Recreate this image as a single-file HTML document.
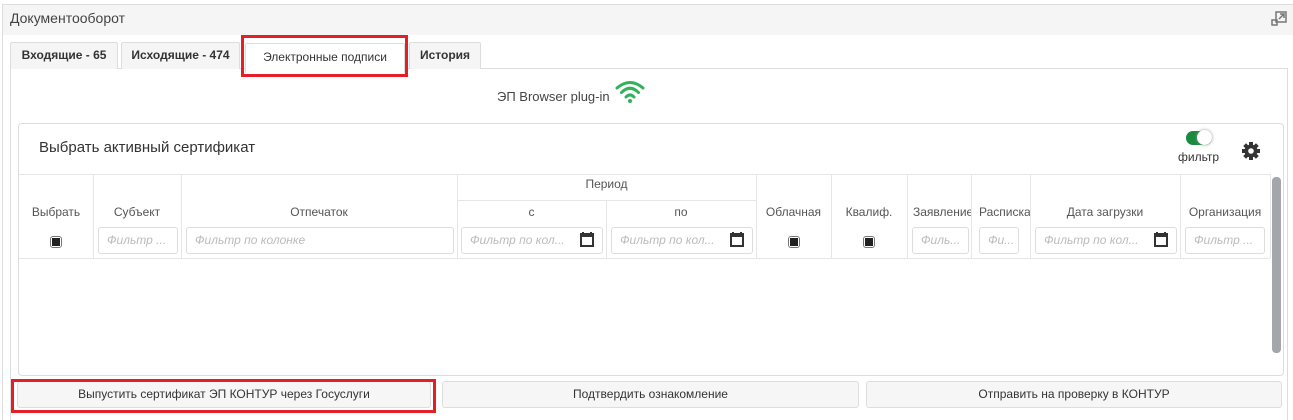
<!DOCTYPE html>
<html><head><meta charset="utf-8"><style>
*{box-sizing:border-box;margin:0;padding:0}
body{width:1293px;height:420px;background:#fff;font-family:"Liberation Sans",sans-serif;color:#333;position:relative;overflow:hidden}
.a{position:absolute}
.hdr{left:2px;top:4px;width:1291px;height:31px;background:#f5f5f5;border-top:1px solid #ddd;border-left:1px solid #ddd}
.tab{position:absolute;top:42px;height:27px;border:1px solid #ddd;border-bottom:none;background:#f5f5f5;font-size:12px;font-weight:bold;color:#333;text-align:center;line-height:25px;border-radius:2px 2px 0 0}
.lbl{position:absolute;top:205px;font-size:12px;color:#555;text-align:center}
.inp{position:absolute;top:227px;height:27px;border:1px solid #ddd;border-radius:3px;font-size:12px;font-style:italic;color:#bbb;padding-left:8px;line-height:25px;white-space:nowrap;overflow:hidden}
.cb{position:absolute;top:236px;width:12px;height:12px;border:1px solid #777;border-radius:3px;background:#fff}
.cb:after{content:"";position:absolute;left:1px;top:1px;width:8px;height:8px;background:#222}
.vl{position:absolute;width:1px;background:#e6e6e6}
.btn{position:absolute;top:381px;height:27px;border:1px solid #ddd;border-radius:3px;background:#f6f6f6;font-size:12px;text-align:center;line-height:25px;color:#333}
.cal{position:absolute;top:232px}
</style></head><body>
<div class="a hdr"></div>
<div class="a" style="left:2px;top:35px;width:1px;height:385px;background:#ddd"></div>
<div class="a" style="left:10px;top:10px;font-size:14px;color:#444">Документооборот</div>
<svg class="a" style="left:1271px;top:11px" width="16" height="16" viewBox="0 0 16 16"><rect x="5" y="1" width="10" height="10" fill="none" stroke="#777" stroke-width="1.5"/><rect x="1" y="9" width="5" height="5" fill="none" stroke="#777" stroke-width="1.5"/><path d="M8 8l5-5M9 3h4v4" fill="none" stroke="#777" stroke-width="1.5"/></svg>
<div class="a" style="left:10px;top:68px;width:1278px;height:1px;background:#ddd"></div>
<div class="a" style="left:1287px;top:68px;width:1px;height:352px;background:#ddd"></div>
<div class="a" style="left:10px;top:68px;width:1px;height:352px;background:#ddd"></div>
<div class="tab" style="left:10px;width:108px">Входящие - 65</div>
<div class="tab" style="left:121px;width:119px">Исходящие - 474</div>
<div class="tab" style="left:245px;top:43px;width:160px;height:30px;background:#fff;font-weight:normal;line-height:27px">Электронные подписи</div>
<div class="tab" style="left:409px;width:72px">История</div>
<div class="a" style="left:241px;top:35px;width:167px;height:42px;border:3px solid #e32028"></div>
<div class="a" style="left:497px;top:89px;font-size:13px;color:#444">ЭП Browser plug-in</div>
<svg class="a" style="left:614px;top:78px" width="32" height="26" viewBox="0 0 32 26"><path d="M3 10Q16-1 29 10M7.5 14.5Q16 6 24.5 14.5M12 19Q16 15 20 19" fill="none" stroke="#2fb35a" stroke-width="3" stroke-linecap="round"/><circle cx="16" cy="23" r="2" fill="#2fb35a"/></svg>
<div class="a" style="left:18px;top:123px;width:1266px;height:253px;border:1px solid #ddd;border-radius:4px"></div>
<div class="a" style="left:39px;top:139px;font-size:15px;color:#333">Выбрать активный сертификат</div>
<div class="a" style="left:1186px;top:131px;width:26px;height:14px;border-radius:7px;background:#1a8a3e"></div>
<div class="a" style="left:1197px;top:130px;width:15px;height:15px;border-radius:50%;background:#fff;box-shadow:0 0 3px #999"></div>
<div class="a" style="left:1178px;top:150px;font-size:12px;color:#333">фильтр</div>
<svg class="a" style="left:1241px;top:141px" width="20" height="20" viewBox="0 0 20 20"><g fill="#333"><circle cx="10" cy="10" r="6.5"/><rect x="8" y="1" width="4" height="18"/><rect x="1" y="8" width="18" height="4"/><rect x="8" y="1" width="4" height="18" transform="rotate(45 10 10)"/><rect x="8" y="1" width="4" height="18" transform="rotate(-45 10 10)"/></g><circle cx="10" cy="10" r="2.8" fill="#fff"/></svg>
<div class="a" style="left:19px;top:174px;width:1251px;height:1px;background:#e6e6e6"></div>
<div class="a" style="left:19px;top:258px;width:1251px;height:1px;background:#e6e6e6"></div>
<div class="a" style="left:457px;top:200px;width:299px;height:1px;background:#e6e6e6"></div>
<div class="vl" style="left:93px;top:174px;height:84px"></div>
<div class="vl" style="left:181px;top:174px;height:84px"></div>
<div class="vl" style="left:457px;top:174px;height:84px"></div>
<div class="vl" style="left:606px;top:200px;height:58px"></div>
<div class="vl" style="left:756px;top:174px;height:84px"></div>
<div class="vl" style="left:831px;top:174px;height:84px"></div>
<div class="vl" style="left:907px;top:174px;height:84px"></div>
<div class="vl" style="left:971px;top:174px;height:84px"></div>
<div class="vl" style="left:1030px;top:174px;height:84px"></div>
<div class="vl" style="left:1180px;top:174px;height:84px"></div>
<div class="vl" style="left:1270px;top:174px;height:84px"></div>
<div class="lbl" style="left:457px;width:299px;top:177px">Период</div>
<div class="lbl" style="left:19px;width:74px">Выбрать</div>
<div class="lbl" style="left:93px;width:88px">Субъект</div>
<div class="lbl" style="left:181px;width:276px">Отпечаток</div>
<div class="lbl" style="left:457px;width:149px">с</div>
<div class="lbl" style="left:606px;width:150px">по</div>
<div class="lbl" style="left:756px;width:75px">Облачная</div>
<div class="lbl" style="left:831px;width:76px">Квалиф.</div>
<div class="lbl" style="left:913px;width:58px;text-align:left;overflow:hidden;white-space:nowrap">Заявление</div>
<div class="lbl" style="left:979px;width:51px;text-align:left;overflow:hidden;white-space:nowrap">Расписка</div>
<div class="lbl" style="left:1030px;width:150px">Дата загрузки</div>
<div class="lbl" style="left:1180px;width:90px;white-space:nowrap">Организация</div>
<div class="cb" style="left:50px"></div>
<div class="cb" style="left:788px"></div>
<div class="cb" style="left:863px"></div>
<div class="inp" style="left:98px;width:80px">Фильтр ...</div>
<div class="inp" style="left:186px;width:268px">Фильтр по колонке</div>
<div class="inp" style="left:461px;width:142px">Фильтр по кол...</div>
<svg class="cal" style="left:580px" width="14" height="15" viewBox="0 0 14 15"><path d="M3 0v3M11 0v3" stroke="#333" stroke-width="2"/><rect x="1" y="2" width="12" height="12" fill="none" stroke="#333" stroke-width="2"/><rect x="1" y="2" width="12" height="3" fill="#333"/></svg>
<div class="inp" style="left:611px;width:142px">Фильтр по кол...</div>
<svg class="cal" style="left:730px" width="14" height="15" viewBox="0 0 14 15"><path d="M3 0v3M11 0v3" stroke="#333" stroke-width="2"/><rect x="1" y="2" width="12" height="12" fill="none" stroke="#333" stroke-width="2"/><rect x="1" y="2" width="12" height="3" fill="#333"/></svg>
<div class="inp" style="left:912px;width:57px">Филь...</div>
<div class="inp" style="left:979px;width:40px">Фи...</div>
<div class="inp" style="left:1035px;width:142px">Фильтр по кол...</div>
<svg class="cal" style="left:1154px" width="14" height="15" viewBox="0 0 14 15"><path d="M3 0v3M11 0v3" stroke="#333" stroke-width="2"/><rect x="1" y="2" width="12" height="12" fill="none" stroke="#333" stroke-width="2"/><rect x="1" y="2" width="12" height="3" fill="#333"/></svg>
<div class="inp" style="left:1185px;width:80px">Фильтр ...</div>
<div class="a" style="left:1272px;top:177px;width:9px;height:176px;border-radius:4px;background:#a3a6ab"></div>
<div class="btn" style="left:17px;width:414px">Выпустить сертификат ЭП КОНТУР через Госуслуги</div>
<div class="a" style="left:11px;top:379px;width:425px;height:34px;border:3px solid #e32028"></div>
<div class="btn" style="left:442px;width:417px">Подтвердить ознакомление</div>
<div class="btn" style="left:866px;width:416px">Отправить на проверку в КОНТУР</div>
</body></html>
